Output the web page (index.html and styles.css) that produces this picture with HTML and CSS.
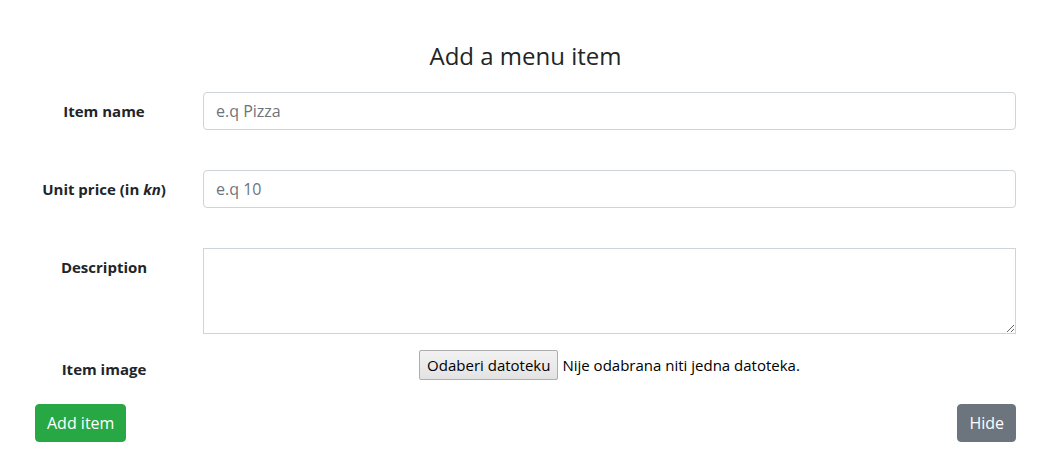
FILE: index.html
```html
<!DOCTYPE html>
<html lang="en">
<head>
<meta charset="utf-8">
<title>Add a menu item</title>
<link rel="stylesheet" href="styles.css">
</head>
<body>
<div class="container">
  <h4 class="title">Add a menu item</h4>
  <form class="menu-form">
    <div class="row row-gap-lg">
      <label class="col-label" for="name">Item name</label>
      <div class="col-field"><input id="name" class="form-control" type="text" placeholder="e.q Pizza"></div>
    </div>
    <div class="row row-gap-lg">
      <label class="col-label" for="price">Unit price (in <i>kn</i>)</label>
      <div class="col-field"><input id="price" class="form-control" type="text" placeholder="e.q 10"></div>
    </div>
    <div class="row row-gap">
      <label class="col-label" for="desc">Description</label>
      <div class="col-field"><textarea id="desc" class="form-control textarea" rows="3"></textarea></div>
    </div>
    <div class="row row-gap">
      <label class="col-label">Item image</label>
      <div class="col-field file-col">
        <span class="file-input"><span class="file-btn">Odaberi datoteku</span><span class="file-text">Nije odabrana niti jedna datoteka.</span></span>
      </div>
    </div>
    <div class="actions">
      <button type="button" class="btn btn-success">Add item</button>
      <button type="button" class="btn btn-secondary">Hide</button>
    </div>
  </form>
</div>
</body>
</html>
```
FILE: styles.css
```css
* { box-sizing: border-box; }
html, body { margin: 0; padding: 0; background: #fff; }
body {
  font-family: "Open Sans", "Noto Sans", Arial, sans-serif;
  font-size: 16px;
  line-height: 1.5;
  color: #212529;
}
.container {
  width: 1016px;
  padding-left: 35px;
  padding-top: 41px;
}
.title {
  margin: 0 0 22px;
  font-size: 24px;
  font-weight: 500;
  line-height: 29px;
  text-align: center;
  color: #212529;
}
.row {
  display: flex;
  align-items: flex-start;
}
.row-gap-lg { margin-bottom: 40px; }
.row-gap { margin-bottom: 16px; }
.col-label {
  flex: 0 0 138px;
  width: 138px;
  margin-right: 30px;
  padding: 7px 0;
  text-align: center;
  font-size: 15px;
  font-weight: 700;
  line-height: 24px;
  white-space: nowrap;
}
.col-field {
  flex: 1 1 auto;
  min-width: 0;
}
.form-control {
  display: block;
  width: 100%;
  height: 38px;
  padding: 6px 12px;
  font: inherit;
  font-size: 16px;
  line-height: 24px;
  color: #495057;
  background: #fff;
  border: 1px solid #ced4da;
  border-radius: 4px;
  outline: none;
}
.form-control::placeholder { color: #6c757d; opacity: 1; }
.textarea {
  height: 86px;
  border-radius: 0;
  resize: vertical;
}
.file-col {
  text-align: center;
}
.file-input {
  display: inline-flex;
  align-items: center;
  font-size: 15px;
  color: #000;
  line-height: 20px;
}
.file-btn {
  display: inline-block;
  height: 30px;
  padding: 4px 7px;
  border: 1px solid #adadad;
  border-radius: 2px;
  background: linear-gradient(#f2f2f2, #e3e3e3);
  color: #000;
  margin-right: 4px;
}
.actions {
  display: flex;
  justify-content: space-between;
}
.btn {
  font: inherit;
  font-size: 16px;
  line-height: 24px;
  padding: 6px 11px;
  border: 1px solid transparent;
  border-radius: 4px;
  color: #fff;
  cursor: pointer;
}
.btn-success { background: #28a745; border-color: #28a745; }
.btn-secondary { background: #6c757d; border-color: #6c757d; }
```
